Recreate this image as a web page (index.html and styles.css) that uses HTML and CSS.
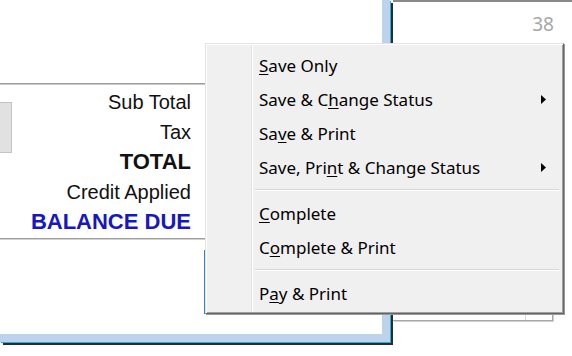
FILE: index.html
```html
<!DOCTYPE html>
<html lang="en">
<head>
    <meta charset="UTF-8">
    <meta name="viewport" content="width=device-width, initial-scale=1.0">
    <title>Invoice Save Menu</title>
    <link rel="stylesheet" href="styles.css">
</head>
<body>
    <div class="screen">
        <div class="window">
            <div class="top-area"></div>
            <div class="summary">
                <div class="side-button"></div>
                <div class="totals">
                    <div class="row">Sub Total</div>
                    <div class="row">Tax</div>
                    <div class="row strong">TOTAL</div>
                    <div class="row">Credit Applied</div>
                    <div class="row strong due">BALANCE DUE</div>
                </div>
            </div>
            <div class="focus-button"></div>
        </div>

        <div class="side">
            <div class="num-box">38</div>
            <div class="combo">
                <div class="combo-btn"></div>
            </div>
        </div>

        <ul class="menu">
            <li class="item"><span><u>S</u>ave Only</span></li>
            <li class="item"><span>Save &amp; C<u>h</u>ange Status</span>
                <svg class="arrow" width="5" height="9" viewBox="0 0 5 9"><polygon points="0,0 5,4.5 0,9" fill="#000"/></svg>
            </li>
            <li class="item"><span>Sa<u>v</u>e &amp; Print</span></li>
            <li class="item"><span>Save, Pri<u>n</u>t &amp; Change Status</span>
                <svg class="arrow" width="5" height="9" viewBox="0 0 5 9"><polygon points="0,0 5,4.5 0,9" fill="#000"/></svg>
            </li>
            <li class="sep"></li>
            <li class="item"><span><u>C</u>omplete</span></li>
            <li class="item"><span>C<u>o</u>mplete &amp; Print</span></li>
            <li class="sep"></li>
            <li class="item"><span>P<u>a</u>y &amp; Print</span></li>
        </ul>
    </div>
</body>
</html>
```

FILE: styles.css
```css
body {
    margin: 0;
    background-color: #FFF;
    font-family: "Liberation Sans", Arial, sans-serif;
}
.screen {
    position: relative;
    width: 572px;
    height: 356px;
    overflow: hidden;
    display: flex;
    align-items: flex-start;
    background-color: #FFF;
}

/* window with the blue frame */
.window {
    flex: 0 0 390px;
    height: 342px;
    box-sizing: border-box;
    border-right: 8px solid #BBD3EC;
    border-bottom: 8px solid #BBD3EC;
    box-shadow: 1px 1px 0 #1DB5DA, 3px 3px 0 #2B2B2B;
    margin-right: 3px;
}
.top-area {
    height: 83px;
    border-bottom: 1px solid #A0A0A0;
    box-shadow: 0 1px 0 #C8C8C8;
}
.summary {
    display: flex;
    margin-top: 3px;
    padding-bottom: 1px;
    border-bottom: 1px solid #A0A0A0;
    box-shadow: 0 1px 0 #D0D0D0;
}
.side-button {
    width: 11px;
    height: 49px;
    margin-top: 15px;
    background-color: #E1E1E1;
    border: 1px solid #C4C4C4;
    border-left: none;
}
.totals {
    width: 179px;
    display: flex;
    flex-direction: column;
    align-items: flex-end;
}
.row {
    height: 30px;
    line-height: 30px;
    font-size: 20px;
    color: #111;
}
.strong {
    font-weight: bold;
    font-size: 22px;
}
.due {
    color: #1616C4;
}
.focus-button {
    width: 150px;
    height: 62px;
    margin: 11px 0 0 204px;
    border: 1px solid #3C7DD6;
}

/* right part behind the menu */
.side {
    flex: 1;
    display: flex;
    flex-direction: column;
}
.num-box {
    height: 40px;
    border-top: 2px solid #8A8A8A;
    padding-right: 18px;
    text-align: right;
    font-family: "Noto Sans", sans-serif;
    font-size: 19px;
    line-height: 44px;
    color: #A6A6A6;
}
.combo {
    width: 159px;
    height: 28px;
    margin-top: 250px;
    display: flex;
    justify-content: flex-end;
    border-right: 1px solid #A8A8A8;
    border-bottom: 1px solid #A8A8A8;
    box-shadow: 1px 1px 0 #D0D0D0;
}
.combo-btn {
    width: 26px;
    border-left: 1px solid #D8D8D8;
}

/* popup menu */
.menu {
    position: absolute;
    left: 205px;
    top: 43px;
    width: 359px;
    height: 271px;
    box-sizing: border-box;
    margin: 0;
    padding: 4px 2px 3px;
    list-style: none;
    border: 1px solid;
    border-color: #E3E3E3 #646464 #646464 #E3E3E3;
    box-shadow: inset 1px 1px 0 #FFF, inset -1px -1px 0 #A0A0A0, 1px 1px 0 #9A9A9A;
    background: linear-gradient(to right, #F0F0F0 45px, #E3E3E3 45px, #E3E3E3 46px, #FFF 46px, #FFF 47px, #F0F0F0 47px);
    font-family: "Noto Sans", sans-serif;
    font-size: 17px;
    color: #000;
}
.item {
    height: 34px;
    display: flex;
    align-items: center;
    justify-content: space-between;
    padding: 0 15px 0 51px;
}
.item u {
    text-decoration-thickness: 1px;
    text-underline-offset: 2px;
}
.sep {
    height: 1px;
    margin: 5px 2px 5px 47px;
    background-color: #D7D7D7;
    border-bottom: 1px solid #FFF;
}
```
